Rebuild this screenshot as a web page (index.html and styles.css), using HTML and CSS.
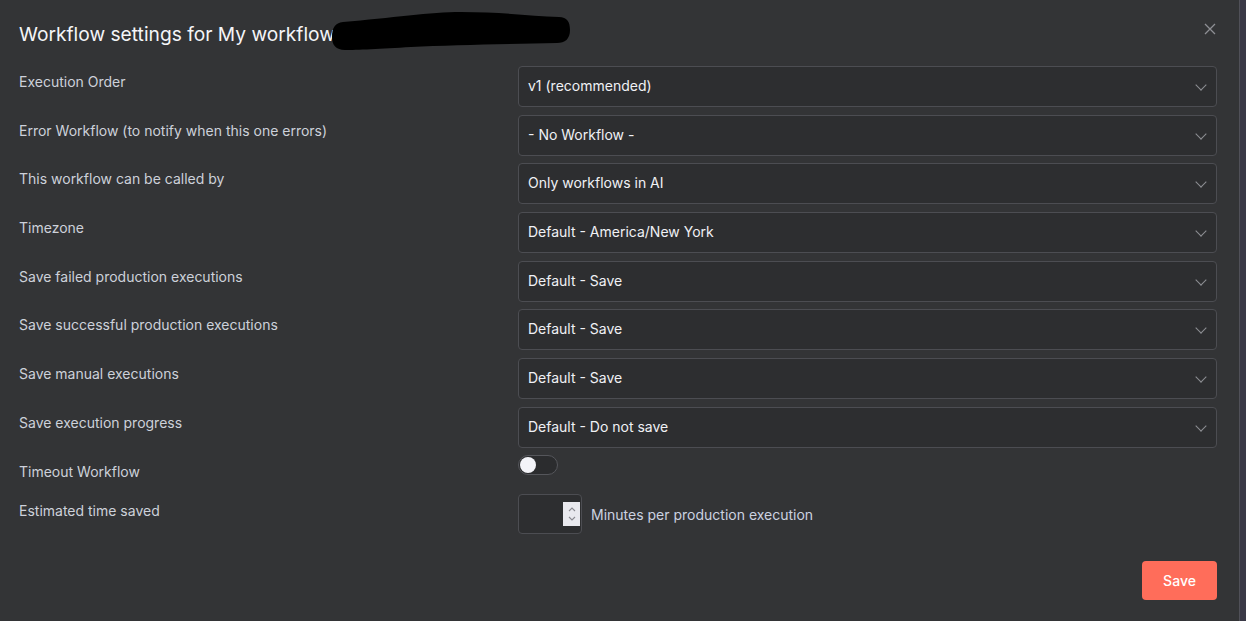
FILE: index.html
```html
<!DOCTYPE html>
<html lang="en">
<head>
    <meta charset="UTF-8">
    <title>Workflow settings</title>
    <link rel="stylesheet" href="styles.css">
</head>
<body>
    <div class="dialog">
        <div class="dialog-header">
            <h1 class="title">Workflow settings for My workflow<svg class="redact" width="240" height="40" viewBox="0 0 240 40"><path d="M12 10 C60 6 100 0 130 0 C170 0 200 4 228 5 C236 5 239 10 239 18 C239 27 234 31 226 31 C180 32 120 33 80 35 C50 37 25 38 14 38 C5 38 1 33 1 25 C1 16 4 11 12 10 Z" fill="#000"/></svg></h1>
            <span class="close-button">
                <svg width="12" height="12" viewBox="0 0 12 12"><path d="M1 1 L11 11 M11 1 L1 11" stroke="#8e8f94" stroke-width="1.3"/></svg>
            </span>
        </div>

        <div class="settings">
            <label class="setting-label">Execution Order</label>
            <div class="select">v1 (recommended)<span class="chevron"></span></div>

            <label class="setting-label">Error Workflow (to notify when this one errors)</label>
            <div class="select">- No Workflow -<span class="chevron"></span></div>

            <label class="setting-label">This workflow can be called by</label>
            <div class="select">Only workflows in AI<span class="chevron"></span></div>

            <label class="setting-label">Timezone</label>
            <div class="select">Default - America/New York<span class="chevron"></span></div>

            <label class="setting-label">Save failed production executions</label>
            <div class="select">Default - Save<span class="chevron"></span></div>

            <label class="setting-label">Save successful production executions</label>
            <div class="select">Default - Save<span class="chevron"></span></div>

            <label class="setting-label">Save manual executions</label>
            <div class="select">Default - Save<span class="chevron"></span></div>

            <label class="setting-label">Save execution progress</label>
            <div class="select">Default - Do not save<span class="chevron"></span></div>

            <label class="setting-label">Timeout Workflow</label>
            <div class="toggle-cell"><span class="toggle"><span class="knob"></span></span></div>

            <label class="setting-label">Estimated time saved</label>
            <div class="time-saved">
                <div class="number-input">
                    <span class="spinner">
                        <svg width="10" height="20" viewBox="0 0 10 20"><path d="M2 7 L5 4 L8 7 M2 13 L5 16 L8 13" fill="none" stroke="#8a8a90" stroke-width="1.1"/></svg>
                    </span>
                </div>
                <span class="hint">Minutes per production execution</span>
            </div>
        </div>

        <div class="dialog-footer">
            <button class="save-button">Save</button>
        </div>
    </div>
</body>
</html>
```

FILE: styles.css
```css
body {
    margin: 0;
    background-color: #3a3946;
    font-family: 'Inter', 'Open Sans', sans-serif;
    height: 621px;
    overflow: hidden;
}
.dialog {
    width: 1240px;
    height: 621px;
    box-sizing: border-box;
    background-color: #333436;
    border-right: 1px solid #505058;
    padding: 0 22px 0 19px;
}
.dialog-header {
    display: flex;
    justify-content: space-between;
    align-items: flex-start;
    padding-top: 18px;
    height: 66px;
    box-sizing: border-box;
}
.title {
    margin: 0;
    font-size: 19.2px;
    font-weight: 400;
    line-height: 32px;
    color: #f4f5f8;
    white-space: nowrap;
}
.redact {
    vertical-align: middle;
    margin-left: -4px;
    margin-top: -8px;
}
.close-button {
    margin-top: 1px;
    margin-right: 1px;
    cursor: pointer;
}

/* 設定の一覧 */
.settings {
    display: grid;
    grid-template-columns: 499px 1fr;
    row-gap: 7.7px;
}
.setting-label {
    font-size: 14px;
    line-height: 32px;
    color: #cdd1da;
}
.select {
    position: relative;
    height: 41px;
    box-sizing: border-box;
    border: 1px solid #4c4d52;
    border-radius: 4px;
    background-color: #2d2e30;
    padding: 0 10px 0 9px;
    font-size: 14px;
    line-height: 38px;
    color: #f0f1f5;
}
.chevron {
    position: absolute;
    right: 11px;
    top: 14px;
    width: 7px;
    height: 7px;
    border-right: 1.3px solid #8e8f94;
    border-bottom: 1.3px solid #8e8f94;
    transform: rotate(45deg);
}
.toggle-cell {
    margin-top: -1px;
}
.toggle {
    display: block;
    width: 40px;
    height: 20px;
    box-sizing: border-box;
    border: 1px solid #55565b;
    border-radius: 10px;
    background-color: #2b2c2e;
    position: relative;
}
.knob {
    position: absolute;
    left: 1px;
    top: 1px;
    width: 16px;
    height: 16px;
    border-radius: 50%;
    background-color: #f3f3f8;
}
.time-saved {
    display: flex;
    align-items: center;
    gap: 9px;
    margin-top: -1px;
}
.number-input {
    width: 64px;
    height: 40px;
    box-sizing: border-box;
    border: 1px solid #4c4d52;
    border-radius: 4px;
    background-color: #2d2e30;
    display: flex;
    justify-content: flex-end;
    align-items: center;
    padding-right: 1px;
}
.spinner {
    width: 17px;
    height: 24px;
    background-color: #e9e9ee;
    display: flex;
    justify-content: center;
    align-items: center;
}
.hint {
    font-size: 14px;
    color: #ccd2e0;
}
.dialog-footer {
    display: flex;
    justify-content: flex-end;
    margin-top: 27px;
}
.save-button {
    width: 75px;
    height: 39px;
    border: none;
    border-radius: 4px;
    background-color: #ff6d5a;
    color: #ffffff;
    font-family: inherit;
    font-size: 14px;
    font-weight: 500;
    cursor: pointer;
}
```
